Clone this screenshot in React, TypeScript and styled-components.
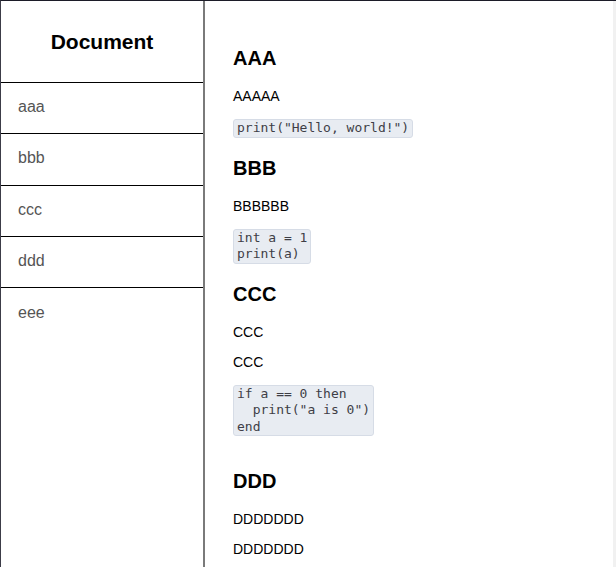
import React from "react";
import styled, { createGlobalStyle } from "styled-components";

const Global = createGlobalStyle`
  html, body { margin: 0; padding: 0; background: #fff; overflow: hidden; }
  body { font-family: "Liberation Sans", Arial, sans-serif; }
`;

const Frame = styled.div`
  display: flex;
  min-height: 567px;
  box-sizing: border-box;
  border-top: 1px solid #1c1c28;
  border-left: 1px solid #3c3c48;
`;

const Sidebar = styled.nav`
  width: 202px;
  flex-shrink: 0;
  border-right: 2px solid #7a7a7a;
  display: flex;
  flex-direction: column;
`;

const SideHeader = styled.div`
  height: 81px;
  display: flex;
  align-items: center;
  justify-content: center;
  font-size: 21px;
  font-weight: bold;
  color: #000;
  border-bottom: 1px solid #000;
`;

const SideItem = styled.div<{ $last?: boolean }>`
  height: 51.3px;
  flex-shrink: 0;
  box-sizing: border-box;
  padding: 0 0 2px 17px;
  display: flex;
  align-items: center;
  font-size: 16px;
  color: #555;
  border-bottom: ${(p) => (p.$last ? "none" : "1px solid #000")};
`;

const Main = styled.main`
  flex: 1;
  padding: 27px 28px 0 28px;
  border-right: 3px solid #f1f1f1;
`;

const Heading = styled.h2<{ $extra?: number }>`
  font-size: 20px;
  line-height: 23px;
  font-weight: bold;
  margin: ${(p) => 19 + (p.$extra ?? 0)}px 0 17px;
  color: #000;
`;

const Para = styled.p`
  font-size: 14px;
  line-height: 18px;
  margin: 12px 0;
  color: #000;
`;

const Code = styled.pre`
  display: block;
  width: fit-content;
  margin: 14px 0;
  padding: 0 3px;
  font-family: "DejaVu Sans Mono", "Liberation Mono", monospace;
  font-size: 13px;
  line-height: 16.5px;
  color: #3e3e46;
  background: #e8ecf2;
  border: 1px solid #d6dce6;
  border-radius: 3px;
`;

type Section = { title: string; paras: string[]; code?: string; extra?: number };

const sections: Section[] = [
  { title: "AAA", paras: ["AAAAA"], code: 'print("Hello, world!")' },
  { title: "BBB", paras: ["BBBBBB"], code: "int a = 1\nprint(a)" },
  { title: "CCC", paras: ["CCC", "CCC"], code: 'if a == 0 then\n  print("a is 0")\nend' },
  { title: "DDD", paras: ["DDDDDDD", "DDDDDDD"], extra: 15 },
];

export default function App() {
  const items = ["aaa", "bbb", "ccc", "ddd", "eee"];
  return (
    <>
      <Global />
      <Frame>
        <Sidebar>
          <SideHeader>Document</SideHeader>
          {items.map((it, i) => (
            <SideItem key={it} $last={i === items.length - 1}>
              {it}
            </SideItem>
          ))}
        </Sidebar>
        <Main>
          {sections.map((s) => (
            <React.Fragment key={s.title}>
              <Heading $extra={s.extra}>{s.title}</Heading>
              {s.paras.map((p, i) => (
                <Para key={i}>{p}</Para>
              ))}
              {s.code && <Code>{s.code}</Code>}
            </React.Fragment>
          ))}
        </Main>
      </Frame>
    </>
  );
}
